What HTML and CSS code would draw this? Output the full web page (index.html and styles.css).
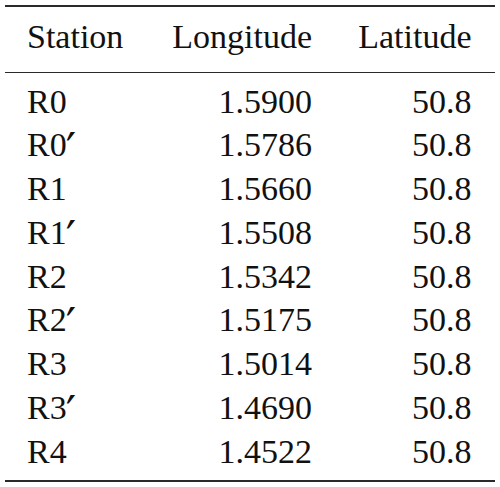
FILE: index.html
```html
<!DOCTYPE html>
<html>
<head>
<meta charset="utf-8">
<link rel="stylesheet" href="styles.css">
</head>
<body>
<table class="tab">
  <colgroup>
    <col class="c1"><col class="c2"><col class="c3">
  </colgroup>
  <thead>
    <tr><th class="l">Station</th><th class="r">Longitude</th><th class="r last">Latitude</th></tr>
  </thead>
  <tbody>
    <tr class="first"><td class="l">R0</td><td class="r">1.5900</td><td class="r last">50.8</td></tr>
    <tr><td class="l">R0<span class="pr">′</span></td><td class="r">1.5786</td><td class="r last">50.8</td></tr>
    <tr><td class="l">R1</td><td class="r">1.5660</td><td class="r last">50.8</td></tr>
    <tr><td class="l">R1<span class="pr">′</span></td><td class="r">1.5508</td><td class="r last">50.8</td></tr>
    <tr><td class="l">R2</td><td class="r">1.5342</td><td class="r last">50.8</td></tr>
    <tr><td class="l">R2<span class="pr">′</span></td><td class="r">1.5175</td><td class="r last">50.8</td></tr>
    <tr><td class="l">R3</td><td class="r">1.5014</td><td class="r last">50.8</td></tr>
    <tr><td class="l">R3<span class="pr">′</span></td><td class="r">1.4690</td><td class="r last">50.8</td></tr>
    <tr class="end"><td class="l">R4</td><td class="r">1.4522</td><td class="r last">50.8</td></tr>
  </tbody>
</table>
</body>
</html>
```
FILE: styles.css
```css
html, body {
  margin: 0;
  padding: 0;
  background: #fff;
}

.tab {
  margin: 5px 0 0 5px;
  width: 490px;
  table-layout: fixed;
  border-collapse: collapse;
  border-spacing: 0;
  font-family: "Liberation Serif", "Times New Roman", serif;
  font-size: 34px;
  color: #111;
  border-top: 2px solid #2a2a2a;
  border-bottom: 2px solid #2a2a2a;
}

.c1 { width: 145px; }
.c2 { width: 162px; }
.c3 { width: 183px; }

.tab th {
  font-weight: normal;
  line-height: 44px;
  padding: 7.5px 0 13px 0;
  border-bottom: 1px solid #2a2a2a;
}

.tab td {
  line-height: 43.75px;
  padding: 0;
}

.tab .first td { padding-top: 7px; }
.tab .end td { padding-bottom: 6.5px; }

.l { text-align: left; padding-left: 22px !important; }
.r { text-align: right; }
.last { padding-right: 23.5px !important; }

.pr {
  font-family: "DejaVu Serif", serif;
  font-size: 46px;
  line-height: 0;
  vertical-align: -10px;
  margin-left: -1px;
}
```
